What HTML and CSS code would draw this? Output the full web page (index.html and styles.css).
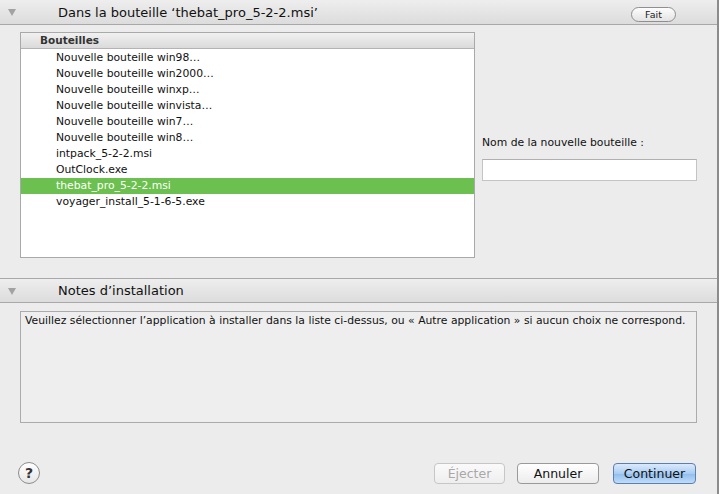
FILE: index.html
```html
<!DOCTYPE html>
<html lang="fr">
<head>
<meta charset="utf-8">
<title>Installation</title>
<link rel="stylesheet" href="styles.css">
</head>
<body>
<div class="window">
  <div class="bar bar-top">
    <span class="disclosure"></span>
    <span class="bar-title">Dans la bouteille ‘thebat_pro_5-2-2.msi’</span>
    <button class="pill">Fait</button>
  </div>

  <div class="upper">
    <div class="listbox">
      <div class="list-head">Bouteilles</div>
      <ul class="rows">
        <li>Nouvelle bouteille win98…</li>
        <li>Nouvelle bouteille win2000…</li>
        <li>Nouvelle bouteille winxp…</li>
        <li>Nouvelle bouteille winvista…</li>
        <li>Nouvelle bouteille win7…</li>
        <li>Nouvelle bouteille win8…</li>
        <li>intpack_5-2-2.msi</li>
        <li>OutClock.exe</li>
        <li class="selected">thebat_pro_5-2-2.msi</li>
        <li>voyager_install_5-1-6-5.exe</li>
      </ul>
    </div>
    <div class="side">
      <label class="side-label">Nom de la nouvelle bouteille :</label>
      <div class="field"></div>
    </div>
  </div>

  <div class="bar bar-mid">
    <span class="disclosure"></span>
    <span class="bar-title">Notes d’installation</span>
  </div>

  <div class="notes">Veuillez sélectionner l’application à installer dans la liste ci-dessus, ou « Autre application » si aucun choix ne correspond.</div>

  <div class="footer">
    <span class="help">?</span>
    <div class="actions">
      <button class="btn disabled">Éjecter</button>
      <button class="btn">Annuler</button>
      <button class="btn primary">Continuer</button>
    </div>
  </div>
</div>
</body>
</html>
```

FILE: styles.css
```css
html, body {
  margin: 0;
  padding: 0;
  background: #ececec;
}

body {
  font-family: "DejaVu Sans", "Liberation Sans", sans-serif;
  color: #111;
  width: 719px;
  height: 494px;
  overflow: hidden;
}

.window {
  box-sizing: border-box;
  width: 719px;
  height: 494px;
  background: #ececec;
  border-right: 2px solid #8c8c8c;
  display: flex;
  flex-direction: column;
}

.bar {
  box-sizing: border-box;
  height: 25px;
  display: flex;
  align-items: center;
  background: linear-gradient(#eeeeee, #dcdcdc);
  border-bottom: 1px solid #a8a8a8;
  padding-left: 8px;
  padding-right: 41px;
}

.bar-mid {
  border-top: 1px solid #a8a8a8;
  margin-top: 20px;
}

.disclosure {
  width: 0;
  height: 0;
  border-left: 4px solid transparent;
  border-right: 4px solid transparent;
  border-top: 7px solid #a2a2a2;
  margin-right: 42px;
  margin-top: 1px;
}

.bar-title {
  font-size: 13px;
  color: #111;
  flex: 1;
}

.pill {
  font-family: inherit;
  font-size: 9.5px;
  color: #222;
  height: 15px;
  width: 45px;
  padding: 0;
  border: 1px solid #8f8f8f;
  border-radius: 8px;
  background: linear-gradient(#fdfdfd, #e3e3e3);
  margin-top: 5px;
}

.upper {
  display: flex;
  padding: 7px 22px 0 20px;
  gap: 7px;
  height: 226px;
  box-sizing: content-box;
}

.listbox {
  box-sizing: border-box;
  flex: none;
  width: 455px;
  height: 226px;
  border: 1px solid #a9a9a9;
  background: #fff;
}

.list-head {
  box-sizing: border-box;
  height: 16px;
  background: linear-gradient(#f1f1f1, #dadada);
  border-bottom: 1px solid #b3b3b3;
  font-size: 10.5px;
  font-weight: bold;
  color: #333;
  padding-left: 19px;
  line-height: 15px;
}

.rows {
  list-style: none;
  margin: 0;
  padding: 1px 0 0 0;
}

.rows li {
  height: 16px;
  line-height: 16px;
  font-size: 10.8px;
  padding-left: 35px;
  color: #111;
  white-space: nowrap;
}

.rows li.selected {
  background: #6cc04f;
  color: #fff;
}

.side {
  flex: 1;
  display: flex;
  flex-direction: column;
  padding-top: 103px;
}

.side-label {
  font-size: 10.8px;
  color: #111;
  height: 16px;
  line-height: 16px;
}

.field {
  box-sizing: border-box;
  margin-top: 8px;
  width: 215px;
  height: 22px;
  background: #fff;
  border: 1px solid #c4c4c4;
  border-top-color: #b0b0b0;
}

.notes {
  box-sizing: border-box;
  margin: 8px 20px 0 20px;
  height: 112px;
  border: 1px solid #ababab;
  background: #eeeeee;
  font-size: 10.8px;
  padding: 2px 4px;
  line-height: 14px;
  white-space: nowrap;
  color: #111;
}

.footer {
  display: flex;
  align-items: center;
  justify-content: space-between;
  padding: 39px 21px 0 18px;
}

.help {
  box-sizing: border-box;
  width: 22px;
  height: 22px;
  border-radius: 50%;
  border: 1px solid #8d8d8d;
  background: linear-gradient(#ffffff, #e6e6e6);
  display: flex;
  align-items: center;
  justify-content: center;
  font-weight: bold;
  font-size: 14px;
  color: #333;
}

.actions {
  display: flex;
  gap: 12px;
}

.btn {
  font-family: inherit;
  box-sizing: border-box;
  height: 21px;
  padding: 0;
  border: 1px solid #9a9a9a;
  border-radius: 4px;
  background: linear-gradient(#ffffff, #ececec);
  font-size: 12.5px;
  color: #111;
  width: 82px;
}

.btn.disabled {
  width: 71px;
  color: #a8a8a8;
  border-color: #c6c6c6;
  background: linear-gradient(#fafafa, #eeeeee);
}

.btn.primary {
  width: 83px;
  margin-left: 2px;
  border-color: #5b7fae;
  background: linear-gradient(#dbeafb, #a9cdf3 50%, #8fbdee 51%, #c0dcf8);
}
```
